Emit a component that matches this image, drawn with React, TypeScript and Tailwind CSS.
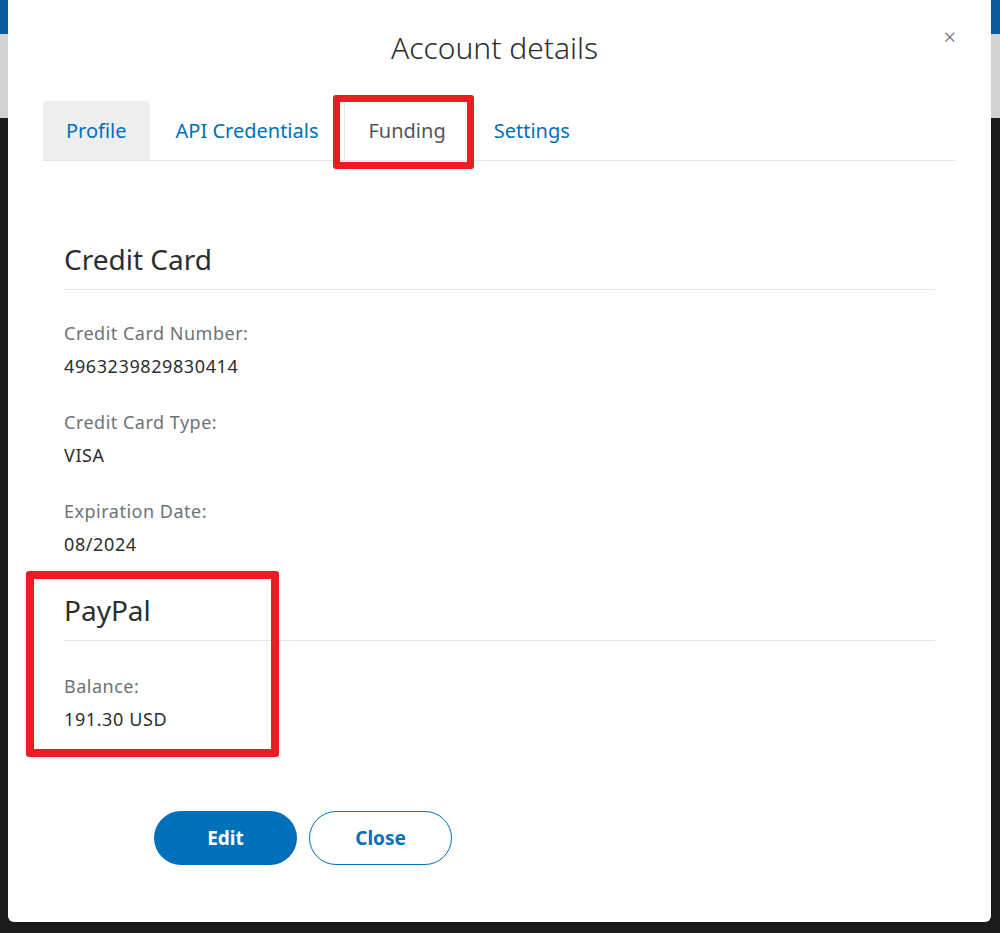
const FONT = "font-['Noto_Sans','Open_Sans',sans-serif]"

const Field = ({ label, value }: { label: string; value: string }) => (
  <div className="flex flex-col gap-[9px]">
    <div className="text-[18px] leading-6 tracking-[0.5px] text-[#6c7378]">{label}</div>
    <div className="text-[18px] leading-6 tracking-[0.6px] text-[#2c2e2f]">{value}</div>
  </div>
)

const Section = ({ title, gap, children }: { title: string; gap: string; children: React.ReactNode }) => (
  <div className="flex flex-col">
    <h3 className="text-[28px] leading-9 text-[#2c2e2f]">{title}</h3>
    <div className="mt-3 h-px bg-[#e6e6e6]" />
    <div className={`${gap} flex flex-col gap-[32px]`}>{children}</div>
  </div>
)

const App = () => {
  return (
    <div className={`relative h-[933px] w-full overflow-hidden bg-[#1a1a1a] ${FONT}`}>
      {/* page behind the dialog */}
      <div className="h-[34px] bg-[#0b5aa0]" />
      <div className="h-[84px] bg-[#d2d2d2]" />

      {/* dialog */}
      <div className="absolute left-[8px] top-[-8px] h-[930px] w-[983px] rounded-md bg-white">
        <div className="relative pr-[10px] pt-[38px] text-center text-[30px] font-light leading-9 text-[#2c2e2f]">
          Account details
          <span className="absolute right-[35px] top-[32px] text-[22px] leading-6 text-[#666]">×</span>
        </div>

        <div className="mx-[35px] mt-[35px]">
          <div className="flex h-[60px] items-stretch border-b border-[#e6e6e6] text-[20px]">
            <div className="flex items-center rounded-t bg-[#eeeeee] px-[23px] text-[#0070ba]">Profile</div>
            <div className="flex items-center px-[26px] text-[#0070ba]">API Credentials</div>
            <div className="flex items-center border-l border-[#e6e6e6] px-[23px] text-[#555]">Funding</div>
            <div className="flex items-center px-[25px] text-[#0070ba]">Settings</div>
          </div>

          <div className="px-[21px] pt-[80px]">
            <Section title="Credit Card" gap="mt-[31px]">
              <Field label="Credit Card Number:" value="4963239829830414" />
              <Field label="Credit Card Type:" value="VISA" />
              <Field label="Expiration Date:" value="08/2024" />
            </Section>
            <div className="mt-[36px]">
              <Section title="PayPal" gap="mt-[33px]">
                <Field label="Balance:" value="191.30 USD" />
              </Section>
            </div>

            <div className="ml-[90px] mt-[80px] flex gap-3">
              <button className="h-[54px] w-[143px] rounded-full bg-[#0070ba] text-[19px] font-bold text-white">Edit</button>
              <button className="h-[54px] w-[143px] rounded-full border border-[#0070ba] bg-white text-[19px] font-bold text-[#0070ba]">Close</button>
            </div>
          </div>
        </div>
      </div>

      {/* annotation boxes */}
      <div className="absolute left-[333px] top-[95px] h-[74px] w-[141px] rounded-[3px] border-[7px] border-[#ed1c24]" />
      <div className="absolute left-[26px] top-[571px] h-[186px] w-[253px] rounded-[3px] border-[8px] border-[#ed1c24]" />
    </div>
  )
}

export default App
